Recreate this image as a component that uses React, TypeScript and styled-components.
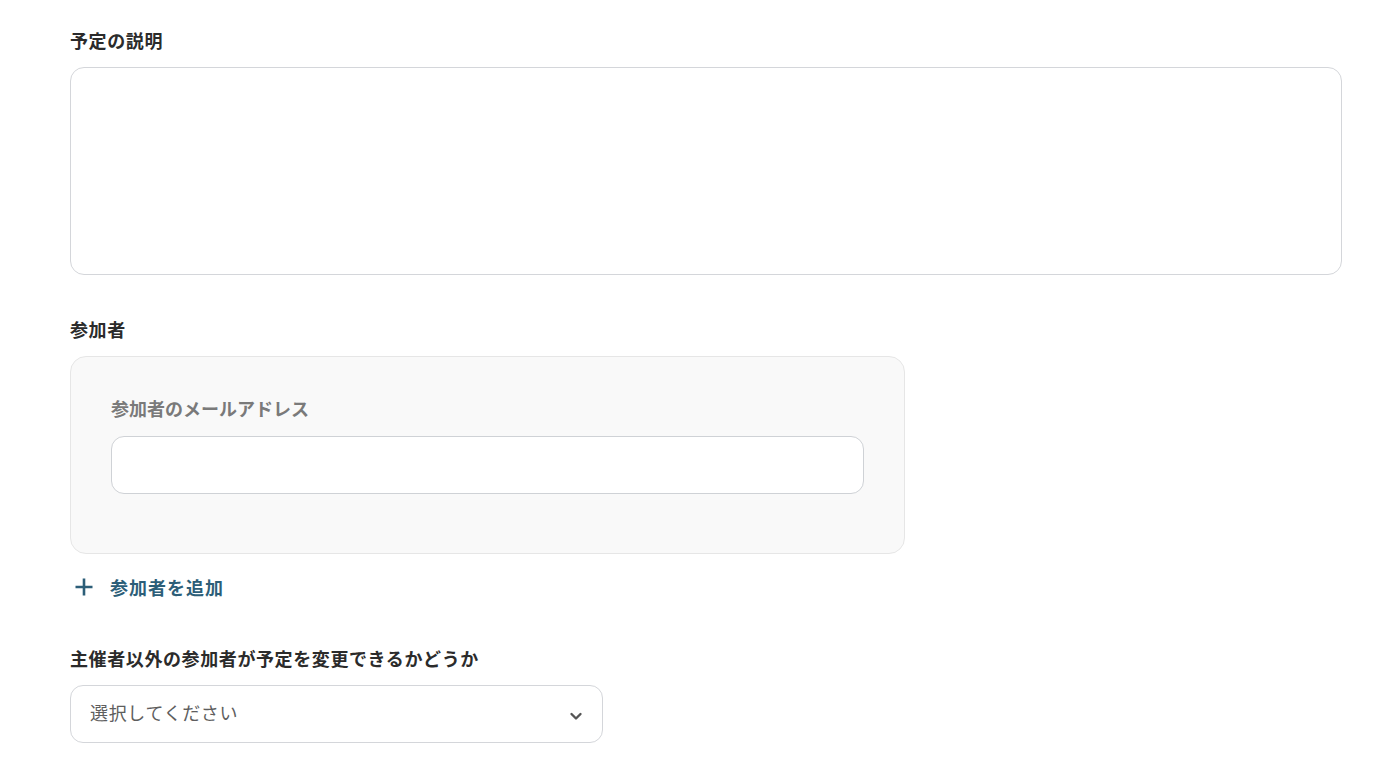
import React from "react";
import styled, { createGlobalStyle } from "styled-components";

const GlobalStyle = createGlobalStyle`
  html, body {
    margin: 0;
    padding: 0;
    background: #ffffff;
  }
  body {
    font-family: "Noto Sans CJK JP", "Noto Sans", sans-serif;
    color: #2b2b2b;
  }
`;

const Page = styled.div`
  padding: 28px 42px 0 70px;
  display: flex;
  flex-direction: column;
`;

const Field = styled.div<{ $mb?: number }>`
  display: flex;
  flex-direction: column;
  gap: 15px;
  margin-bottom: ${(p) => p.$mb ?? 0}px;
`;

const Label = styled.label<{ $muted?: boolean }>`
  font-size: 18px;
  line-height: 24px;
  font-weight: 700;
  letter-spacing: ${(p) => (p.$muted ? "0" : "0.6px")};
  color: ${(p) => (p.$muted ? "#7a7a7a" : "#2b2b2b")};
`;

const TextArea = styled.textarea`
  box-sizing: border-box;
  width: 100%;
  height: 208px;
  border: 1px solid #d4d6da;
  border-radius: 14px;
  background: #fff;
  resize: none;
  outline: none;
  font-family: inherit;
`;

const GroupBox = styled.div`
  box-sizing: border-box;
  width: 835px;
  height: 198px;
  background: #f9f9f9;
  border: 1px solid #e6e6e6;
  border-radius: 16px;
  padding: 39px 40px 0 40px;
  display: flex;
  flex-direction: column;
  gap: 16px;
`;

const TextInput = styled.input`
  box-sizing: border-box;
  width: 100%;
  height: 58px;
  border: 1px solid #cfd2d6;
  border-radius: 13px;
  background: #fff;
  outline: none;
`;

const AddButton = styled.button`
  display: flex;
  align-items: center;
  gap: 16px;
  margin: 20px 0 46px 4px;
  padding: 0;
  background: none;
  border: none;
  cursor: pointer;
  font-family: inherit;
  font-size: 18px;
  font-weight: 700;
  letter-spacing: 1px;
  line-height: 26px;
  color: #2c5e78;
  svg {
    width: 20px;
    height: 20px;
  }
`;

const SelectBox = styled.div`
  box-sizing: border-box;
  width: 533px;
  height: 58px;
  border: 1px solid #d4d6da;
  border-radius: 13px;
  background: #fff;
  display: flex;
  align-items: center;
  justify-content: space-between;
  padding: 0 18px 0 19px;
`;

const Placeholder = styled.span`
  font-size: 18px;
  line-height: 24px;
  padding-bottom: 4px;
  letter-spacing: 0.65px;
  color: #5e5e5e;
`;

const Chevron = styled.svg`
  width: 16px;
  height: 16px;
  margin-top: 4px;
`;

export default function App(): React.JSX.Element {
  return (
    <>
      <GlobalStyle />
      <Page>
        <Field $mb={42}>
          <Label>予定の説明</Label>
          <TextArea />
        </Field>

        <Field>
          <Label>参加者</Label>
          <GroupBox>
            <Label $muted>参加者のメールアドレス</Label>
            <TextInput />
          </GroupBox>
        </Field>

        <AddButton type="button">
          <svg viewBox="0 0 20 20" fill="none" stroke="#2c5e78" strokeWidth={2.6}>
            <path d="M10 1.5v17M1.5 10h17" />
          </svg>
          参加者を追加
        </AddButton>

        <Field>
          <Label>主催者以外の参加者が予定を変更できるかどうか</Label>
          <SelectBox>
            <Placeholder>選択してください</Placeholder>
            <Chevron viewBox="0 0 16 16" fill="none" stroke="#555" strokeWidth={2.4} strokeLinecap="round" strokeLinejoin="round">
              <path d="M3.5 6l4.5 4.5L12.5 6" />
            </Chevron>
          </SelectBox>
        </Field>
      </Page>
    </>
  );
}
